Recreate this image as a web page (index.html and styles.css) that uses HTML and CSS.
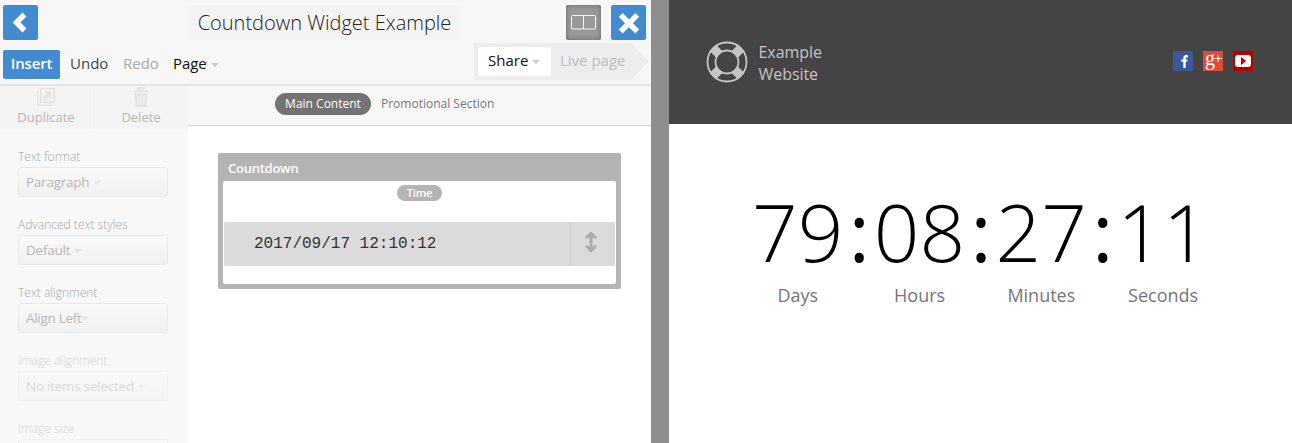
FILE: index.html
```html
<!DOCTYPE html>
<html lang="en">
<head>
<meta charset="utf-8">
<title>Countdown Widget Example</title>
<link rel="stylesheet" href="styles.css">
</head>
<body>
<div class="app">
  <section class="editor">
    <header class="topbar">
      <div class="title-row">
        <button class="square back"><svg width="35" height="35" viewBox="0 0 35 35"><path d="M21.500 9.500 13.500 17.500l8 8" fill="none" stroke="#fff" stroke-width="5.500"/></svg></button>
        <h1 class="title">Countdown Widget Example</h1>
        <button class="square layout"><svg width="35" height="35" viewBox="0 0 35 35"><rect x="5.500" y="10.500" width="24" height="13.500" rx="1" fill="none" stroke="#f4f4f4"/><path d="M17.500 10.500v13.500" stroke="#f4f4f4"/></svg></button>
        <button class="square close"><svg width="35" height="35" viewBox="0 0 35 35"><path d="m9.700 9.900 16.600 16.600m0-16.600L9.700 26.500" stroke="#fff" stroke-width="5.500"/></svg></button>
      </div>
      <nav class="menu-row">
        <span class="insert">Insert</span>
        <span class="menu undo">Undo</span>
        <span class="menu redo">Redo</span>
        <span class="menu page">Page<i class="caret"></i></span>
        <div class="publish"><span class="share">Share<i class="caret"></i></span><span class="live">Live page</span></div>
      </nav>
    </header>
    <div class="workspace">
      <aside class="sidebar">
        <div class="actions">
          <div class="action duplicate"><svg width="18" height="20" viewBox="0 0 18 20"><path d="M.700 4v14.300H15" fill="none" stroke="#e3e3e3" stroke-width="1.400"/><rect x="3.700" y="1.700" width="13.600" height="13.600" fill="none" stroke="#e3e3e3" stroke-width="1.600"/><path d="M7 4.500h7.500V12l-2.500-2.500-4 4L5.500 11l4-4z" fill="#e3e3e3"/></svg><span>Duplicate</span></div>
          <div class="action delete"><svg width="16" height="20" viewBox="0 0 16 20"><path d="M5.500 3V1h5v2M.5 4.300h15" fill="none" stroke="#e2e2e2" stroke-width="2"/><path fill-rule="evenodd" d="M1.500 6.500h13L13.300 20H2.700zM4 8.500l.6 9h1.300v-9zm3.300 0v9h1.400v-9zm2.800 0v9h1.300l.6-9z" fill="#e2e2e2"/></svg><span>Delete</span></div>
        </div>
        <div class="fields">
          <div class="field"><label>Text format</label><div class="select">Paragraph<i class="caret"></i></div></div>
          <div class="field"><label>Advanced text styles</label><div class="select">Default<i class="caret"></i></div></div>
          <div class="field"><label>Text alignment</label><div class="select tight">Align Left<i class="caret"></i></div></div>
          <div class="field off"><label>Image alignment</label><div class="select">No items selected<i class="caret"></i></div></div>
          <div class="field off"><label>Image size</label><div class="select"></div></div>
        </div>
      </aside>
      <main class="canvas">
        <div class="tabs"><span class="tab active">Main Content</span><span class="tab">Promotional Section</span></div>
        <div class="widget">
          <div class="widget-name">Countdown</div>
          <div class="widget-body">
            <span class="pill">Time</span>
            <div class="value-row"><code>2017/09/17 12:10:12</code><span class="handle"><svg width="12" height="22" viewBox="0 0 12 22"><path d="M6 3v16M2 6.300l4-4 4 4M2 15.700l4 4 4-4" fill="none" stroke="#acacac" stroke-width="3" stroke-linecap="round" stroke-linejoin="round"/></svg></span></div>
          </div>
        </div>
      </main>
    </div>
  </section>
  <div class="divider"></div>
  <section class="preview">
    <header class="site-header">
      <svg class="buoy" width="42" height="42" viewBox="0 0 42 42"><g fill="none" stroke="#c5c5c5"><circle cx="21" cy="21" r="19.500" stroke-width="1.800"/><circle cx="21" cy="21" r="11.500" stroke-width="1.800"/></g><path d="m13.200 13.200-6.500-6.500m22.100 6.500 6.500-6.500M13.200 28.800l-6.500 6.500m22.100-6.500 6.500 6.500" stroke="#c5c5c5" stroke-width="9"/></svg>
      <div class="site-name">Example<br>Website</div>
      <div class="social">
        <svg width="20" height="20" viewBox="0 0 20 20"><path fill="#3b5998" d="M0 0h20v20H0z"/><path d="M15 5.200h-1.600c-1.500 0-1.900.8-1.900 2.200V17M8.300 9.600h6" fill="none" stroke="#fff" stroke-width="2.400"/></svg>
        <span class="gplus">g<b>+</b></span>
        <svg width="20" height="20" viewBox="0 0 20 20"><path fill="#b80000" d="M0 0h20v20H0z"/><rect x="2" y="4" width="16" height="12" rx="3" fill="#fff"/><path d="m8 6 5.200 4L8 14z" fill="#b80000"/></svg>
      </div>
    </header>
    <div class="countdown">
      <span class="num">79</span><span class="colon">:</span><span class="num">08</span><span class="colon">:</span><span class="num">27</span><span class="colon">:</span><span class="num">11</span>
      <span class="unit">Days</span><i></i><span class="unit">Hours</span><i></i><span class="unit">Minutes</span><i></i><span class="unit">Seconds</span>
    </div>
  </section>
</div>
</body>
</html>
```
FILE: styles.css
```css
* { box-sizing: border-box; }
body { margin: 0; font-family: "Open Sans", "Noto Sans", sans-serif; }
button { border: 0; padding: 0; }
svg { display: block; }
.app { display: flex; width: 1292px; height: 443px; overflow: hidden; background: #fff; }
.editor { width: 651px; height: 443px; }
.divider { width: 18px; background: #8e8e8e; }
.preview { width: 623px; }
.topbar { height: 86px; background: #f7f7f7; border-bottom: 2px solid #e5e5e5; }
.title-row { display: flex; height: 43px; padding: 5px 5px 0 3px; align-items: flex-start; }
.square { width: 35px; height: 35px; flex: none; border-radius: 2px; background: #428bd0; }
.title { width: 273px; height: 35px; margin: 0 105px 0 150px; background: #f4f4f4; color: #222; text-align: center; font-size: 20px; font-weight: 300; line-height: 36px; white-space: nowrap; border-radius: 2px; }
.layout { margin-right: 10px; background: #999; box-shadow: inset 0 0 5px #666; }
.menu-row { display: flex; height: 41px; padding-left: 3px; font-size: 15px; line-height: 27px; color: #444; white-space: nowrap; }
.insert { width: 57px; height: 29px; margin-top: 7px; border-radius: 2px; background: #428bd0; color: #fff; text-align: center; font-weight: 600; letter-spacing: -.15px; }
.menu { margin-top: 7px; }
.undo { width: 53px; margin-left: 10px; }
.redo { width: 50px; color: #aaa; }
.page { color: #111; letter-spacing: -.1px; }
.caret { display: inline-block; margin-left: 4px; vertical-align: 2px; border: 4px solid transparent; border-top-color: #ccc; border-bottom: 0; }
.publish { display: flex; width: 175px; height: 37px; margin-left: auto; margin-right: 2px; padding: 4px; background: #ededed; clip-path: polygon(0 0, 157px 0, 100% 50%, 157px 100%, 0 100%); }
.share { width: 73px; height: 29px; padding-left: 10px; background: #fff; color: #111; border-radius: 2px; }
.live { margin-left: 9px; color: #bcbcbc; }
.workspace { display: flex; height: 357px; }
.sidebar { width: 188px; background: #f8f8f8; color: #b7b7b7; }
.actions { display: flex; height: 43px; background: #f4f4f4; }
.action { width: 94px; display: flex; flex-direction: column; align-items: center; padding-top: 1px; font-size: 13px; line-height: 20px; }
.duplicate { border-right: 1px solid #f0f0f0; padding-right: 1px; }
.fields { padding: 18px 20px 0 18px; }
.field { height: 68px; }
.field label { display: block; height: 20px; color: #a6a6a6; font-size: 12px; font-weight: 300; line-height: 20px; white-space: nowrap; }
.select { height: 30px; padding-left: 7px; border: 1px solid #e9e9e9; border-radius: 3px; background: linear-gradient(#f9f9f9, #f1f1f1); font-size: 13.500px; line-height: 28px; letter-spacing: -.25px; white-space: nowrap; }
.select .caret { border-top-color: #e6e6e6; }
.select.tight { letter-spacing: -.3px; }
.tight .caret { margin-left: 0; }
.off { opacity: .45; }
.canvas { width: 463px; background: #fff; }
.tabs { display: flex; height: 40px; padding: 7px 0 0 87px; background: #f7f7f7; border-bottom: 1px solid #d5d5d5; font-size: 12px; line-height: 22px; white-space: nowrap; color: #777; }
.tab.active { width: 96px; height: 22px; margin-right: 10px; text-align: center; border-radius: 11px; background: #737373; color: #fff; }
.widget { width: 403px; height: 136px; margin: 27px 0 0 30px; padding: 0 5px 5px; background: #b4b4b4; border-radius: 2px; }
.widget-name { height: 28px; padding: 1px 5px 0; color: #fff; font-size: 13px; font-weight: 600; line-height: 28px; letter-spacing: -.25px; }
.widget-body { display: flex; flex-direction: column; align-items: center; height: 103px; padding: 4px 1px 0; background: #fff; border-radius: 2px; }
.pill { width: 45px; height: 16px; border-radius: 8px; background: #b4b4b4; color: #fff; text-align: center; font-size: 11px; font-weight: 600; line-height: 16px; letter-spacing: -.15px; }
.value-row { display: flex; width: 391px; height: 44px; margin-top: 21px; background: #dbdbdb; border-radius: 2px; }
.value-row code { width: 346px; padding-left: 30px; font: 16px/44px "Liberation Mono", monospace; color: #333; }
.handle { flex: 1; padding: 9px 0 0 14px; border-left: 1px solid #ccc; }
.site-header { display: flex; height: 124px; padding: 41px 39px 0 37px; background: #444; }
.site-name { margin-left: 11px; color: #c5c5c5; font-size: 16px; line-height: 22px; letter-spacing: -.05px; }
.buoy { margin-left: -.5px; }
.social { display: flex; gap: 10px; margin: 10px 0 0 auto; }
.gplus { display: flex; width: 20px; height: 20px; padding-left: 2px; background: #dd4b39; color: #fff; font: 20px/15px "Liberation Serif", serif; }
.gplus b { margin-left: -1px; font-size: 15px; line-height: 15px; font-weight: 400; }
.countdown { display: grid; grid-template-columns: 91.600px 30.200px 91.600px 30.200px 91.600px 30.200px 91.600px; grid-template-rows: 104px 30px; margin: 52px 0 0 83px; color: #000; }
.num { font-size: 80px; font-weight: 300; line-height: 109px; }
.colon { padding-left: 1px; text-align: center; font-size: 80px; line-height: 109px; }
.unit { text-align: center; color: #777; font-size: 18px; line-height: 30px; }
```
